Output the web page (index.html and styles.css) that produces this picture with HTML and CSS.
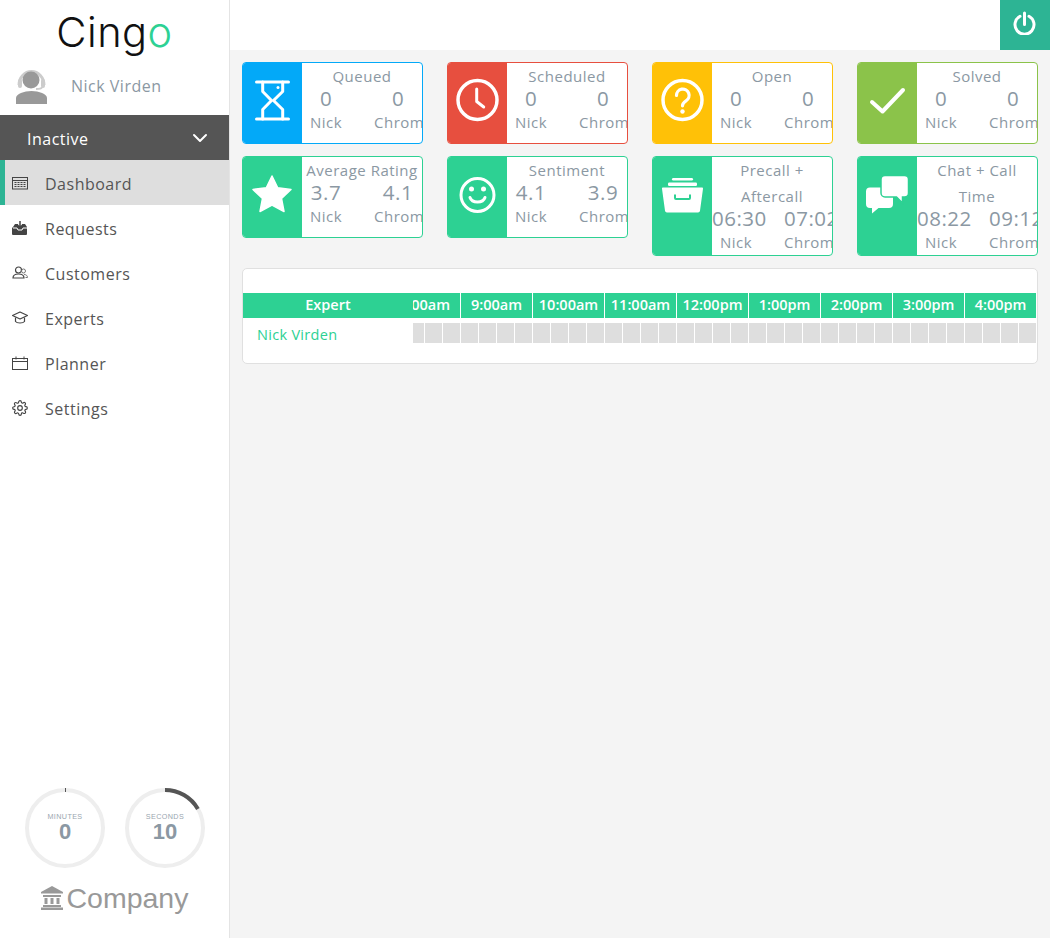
FILE: index.html
```html
<!DOCTYPE html>
<html>
  <head>
    <meta name="viewport" content="width=device-width, initial-scale=1.0" />
    <title>Cingo Dashboard</title>
    <link rel="stylesheet" href="styles.css">
  </head>
  <body>
    <aside class="sidebar">
      <div class="logo">Cing<span class="logo-o">o</span></div>
      <div class="user">
        <svg class="avatar" viewBox="0 0 36 36">
          <path d="M4 17a12 13 0 0 1 25 0" fill="none" stroke="#ccc" stroke-width="3" />
          <circle cx="16" cy="12" r="8.5" fill="#999" />
          <rect x="3" y="11" width="4" height="9" rx="2" fill="#ccc" />
          <rect x="26" y="11" width="4" height="9" rx="2" fill="#ccc" />
          <path d="M27 19q0 2-6 2" fill="none" stroke="#ccc" stroke-width="2" />
          <path d="M1 36v-6c0-4 8-7 15.500-7s15.500 3 15.500 7v6z" fill="#999" />
        </svg>
        <span class="user-name">Nick Virden</span>
      </div>
      <div class="status">
        <span>Inactive</span>
        <svg class="chevron" viewBox="0 0 16 10">
          <path d="M2 2l6 6 6-6" fill="none" stroke="#fff" stroke-width="2" stroke-linecap="round" stroke-linejoin="round" />
        </svg>
      </div>
      <nav class="nav">
        <a class="nav-item active">
          <svg class="nav-icon" viewBox="0 0 16 14">
            <rect x="0.500" y="1.500" width="15" height="11.500" fill="none" stroke="#444" />
            <path d="M1 4.500h14" stroke="#444" />
            <path d="M2.500 6.500h11M2.500 8.500h11M2.500 10.500h11" stroke="#444" stroke-dasharray="2 1" stroke-width="1.200" />
          </svg>
          Dashboard
        </a>
        <a class="nav-item">
          <svg class="nav-icon" viewBox="0 0 16 14">
            <path d="M1 6l2-3h3v2h4V3h3l2 3v7a1 1 0 0 1-1 1H1a1 1 0 0 1-1-1V7z" fill="#444" />
            <path d="M8 0v6M5.500 4L8 6.800 10.500 4" fill="none" stroke="#444" stroke-width="1.500" />
            <path d="M1 7h4l1 2h4l1-2h4" fill="none" stroke="#fff" />
          </svg>
          Requests
        </a>
        <a class="nav-item">
          <svg class="nav-icon" viewBox="0 0 16 14">
            <circle cx="6.500" cy="4" r="3" fill="none" stroke="#444" stroke-width="1.200" />
            <path d="M1 12c0-3 2-4 5.500-4s5.500 1 5.500 4z" fill="none" stroke="#444" stroke-width="1.200" />
            <circle cx="11.500" cy="5" r="2" fill="none" stroke="#777" />
            <path d="M12 8.500c2 0 3.500 1 3.500 3h-2" fill="none" stroke="#777" />
          </svg>
          Customers
        </a>
        <a class="nav-item">
          <svg class="nav-icon" viewBox="0 0 16 14">
            <path d="M8 1l7.500 3.500L8 8 .5 4.500z" fill="none" stroke="#444" stroke-width="1.200" stroke-linejoin="round" />
            <path d="M3.500 6.500v4C5 12.500 11 12.500 12.500 10.500v-4" fill="none" stroke="#444" stroke-width="1.200" />
          </svg>
          Experts
        </a>
        <a class="nav-item">
          <svg class="nav-icon" viewBox="0 0 16 14">
            <rect x="0.500" y="2.500" width="15" height="11" fill="none" stroke="#444" />
            <path d="M1 5.500h14M4 0.500v3M12 0.500v3M7 2.500h2" stroke="#444" />
          </svg>
          Planner
        </a>
        <a class="nav-item">
          <svg class="nav-icon" viewBox="0 0 24 24" fill="none" stroke="#444" stroke-width="1.700">
            <circle cx="12" cy="12" r="3.500" />
            <path d="M19.400 15a1.650 1.650 0 0 0 .33 1.820l.06.06a2 2 0 0 1 0 2.830 2 2 0 0 1-2.830 0l-.06-.06a1.650 1.650 0 0 0-1.820-.33 1.650 1.650 0 0 0-1 1.510V21a2 2 0 0 1-2 2 2 2 0 0 1-2-2v-.09A1.650 1.650 0 0 0 9 19.400a1.650 1.650 0 0 0-1.820.33l-.06.06a2 2 0 0 1-2.830 0 2 2 0 0 1 0-2.830l.06-.06a1.650 1.650 0 0 0 .33-1.820 1.650 1.650 0 0 0-1.510-1H3a2 2 0 0 1-2-2 2 2 0 0 1 2-2h.09A1.650 1.650 0 0 0 4.600 9a1.650 1.650 0 0 0-.33-1.820l-.06-.06a2 2 0 0 1 0-2.830 2 2 0 0 1 2.830 0l.06.06a1.650 1.650 0 0 0 1.820.33H9a1.650 1.650 0 0 0 1-1.510V3a2 2 0 0 1 2-2 2 2 0 0 1 2 2v.09a1.650 1.650 0 0 0 1 1.510 1.650 1.650 0 0 0 1.820-.33l.06-.06a2 2 0 0 1 2.830 0 2 2 0 0 1 0 2.830l-.06.06a1.650 1.650 0 0 0-.33 1.820V9a1.650 1.650 0 0 0 1.510 1H21a2 2 0 0 1 2 2 2 2 0 0 1-2 2h-.09a1.650 1.650 0 0 0-1.510 1z" />
          </svg>
          Settings
        </a>
      </nav>
      <div class="sidebar-foot">
        <div class="timers">
          <svg class="timer" viewBox="0 0 80 80">
            <circle class="timer-track" cx="40" cy="40" r="38" />
            <path d="M40.500 0v4" stroke="#555" />
            <text class="timer-label" x="40" y="31">MINUTES</text>
            <text class="timer-value" x="40" y="51">0</text>
          </svg>
          <svg class="timer" viewBox="0 0 80 80">
            <circle class="timer-track" cx="40" cy="40" r="38" />
            <path class="timer-arc" d="M40 2A38 38 0 0 1 72.900 21" />
            <text class="timer-label" x="40" y="31">SECONDS</text>
            <text class="timer-value" x="40" y="51">10</text>
          </svg>
        </div>
        <div class="company">
          <svg class="company-icon" viewBox="0 0 22 24">
            <path d="M11 0l11 6v1.500H0V6z" fill="#999" />
            <path d="M2 9h18v2H2zM3.500 12h3v6h-3zM9.500 12h3v6h-3zM15.500 12h3v6h-3zM2 19h18v2H2zM0 21.500h22V24H0z" fill="#999" />
          </svg>
          <span>Company</span>
        </div>
      </div>
    </aside>

    <main class="main">
      <header class="topbar">
        <button class="power">
          <svg viewBox="0 0 24 24" width="24" height="24">
            <path d="M7 5.300A9.500 9.500 0 1 0 16 5.300M11.500 2v11.500" fill="none" stroke="#fff" stroke-width="3" stroke-linecap="round" />
          </svg>
        </button>
      </header>

      <section class="cards">
        <div class="card card-blue">
          <div class="card-icon">
            <svg viewBox="0 0 44 44" fill="none" stroke="#fff" stroke-width="3" stroke-linecap="round" stroke-linejoin="round">
              <path d="M6.500 4h32M6.500 41h32" />
              <path d="M12.700 4v9.500L21.500 22.500 12.700 31.500V41M32.700 4v9.500L23.500 22.500 32.700 31.500V41" />
              <circle cx="28" cy="9.500" r="1.500" fill="#fff" stroke="none" />
            </svg>
          </div>
          <div class="card-body">
            <div class="card-title">Queued</div>
            <div class="card-stats">
              <div class="stat"><div class="stat-value">0</div><div class="stat-name">Nick</div></div>
              <div class="stat"><div class="stat-value">0</div><div class="stat-name">Chrome</div></div>
            </div>
          </div>
        </div>

        <div class="card card-red">
          <div class="card-icon">
            <svg viewBox="0 0 44 44" fill="none" stroke="#fff" stroke-width="3.500" stroke-linecap="round" stroke-linejoin="round">
              <circle cx="22.500" cy="22" r="19.500" />
              <path d="M21.700 11v12.500l7 5.500" stroke-width="3" />
            </svg>
          </div>
          <div class="card-body">
            <div class="card-title">Scheduled</div>
            <div class="card-stats">
              <div class="stat"><div class="stat-value">0</div><div class="stat-name">Nick</div></div>
              <div class="stat"><div class="stat-value">0</div><div class="stat-name">Chrome</div></div>
            </div>
          </div>
        </div>

        <div class="card card-yellow">
          <div class="card-icon">
            <svg viewBox="0 0 44 44" fill="none" stroke="#fff" stroke-width="3.500" stroke-linecap="round">
              <circle cx="22.500" cy="22" r="19.500" />
              <path d="M16.500 17.500a6.300 6.300 0 1 1 9.500 5.300c-2.300 1.400-3.500 2.500-3.500 5" stroke-width="3.200" />
              <circle cx="22.500" cy="33.500" r="2.200" fill="#fff" stroke="none" />
            </svg>
          </div>
          <div class="card-body">
            <div class="card-title">Open</div>
            <div class="card-stats">
              <div class="stat"><div class="stat-value">0</div><div class="stat-name">Nick</div></div>
              <div class="stat"><div class="stat-value">0</div><div class="stat-name">Chrome</div></div>
            </div>
          </div>
        </div>

        <div class="card card-lime">
          <div class="card-icon">
            <svg viewBox="0 0 44 44" fill="none" stroke="#fff" stroke-width="4" stroke-linecap="round" stroke-linejoin="round">
              <path d="M7 24l10.500 9.500L38 12" />
            </svg>
          </div>
          <div class="card-body">
            <div class="card-title">Solved</div>
            <div class="card-stats">
              <div class="stat"><div class="stat-value">0</div><div class="stat-name">Nick</div></div>
              <div class="stat"><div class="stat-value">0</div><div class="stat-name">Chrome</div></div>
            </div>
          </div>
        </div>

        <div class="card">
          <div class="card-icon">
            <svg viewBox="0 0 44 44">
              <path d="M22 4l5.700 11.800L41 17.500l-9.500 9 2.500 13-12-6.300-12 6.300 2.500-13-9.500-9 13.300-1.700z" fill="#fff" stroke="#fff" stroke-width="1.500" stroke-linejoin="round" />
            </svg>
          </div>
          <div class="card-body">
            <div class="card-title">Average Rating</div>
            <div class="card-stats">
              <div class="stat"><div class="stat-value">3.7</div><div class="stat-name">Nick</div></div>
              <div class="stat"><div class="stat-value">4.1</div><div class="stat-name">Chrome</div></div>
            </div>
          </div>
        </div>

        <div class="card">
          <div class="card-icon">
            <svg viewBox="0 0 44 44" fill="none" stroke="#fff" stroke-width="3" stroke-linecap="round">
              <circle cx="22.500" cy="23" r="16.500" />
              <circle cx="16.500" cy="17" r="2.500" fill="#fff" stroke="none" />
              <circle cx="28.500" cy="17" r="2.500" fill="#fff" stroke="none" />
              <path d="M15 25.500c2 6 13 6 15 0" />
            </svg>
          </div>
          <div class="card-body">
            <div class="card-title">Sentiment</div>
            <div class="card-stats">
              <div class="stat"><div class="stat-value">4.1</div><div class="stat-name">Nick</div></div>
              <div class="stat"><div class="stat-value">3.9</div><div class="stat-name">Chrome</div></div>
            </div>
          </div>
        </div>

        <div class="card">
          <div class="card-icon">
            <svg viewBox="0 0 44 44">
              <rect x="12" y="6" width="21" height="2.500" rx="1.200" fill="#fff" />
              <rect x="8" y="10.500" width="29" height="3.500" rx="1.200" fill="#fff" />
              <path d="M3 15.500h39a1 1 0 0 1 1 1.200l-3 22a2 2 0 0 1-2 1.800H7a2 2 0 0 1-2-1.800l-3-22a1 1 0 0 1 1-1.200z" fill="#fff" />
              <path d="M15 22.500v3.500a1 1 0 0 0 1 1h13a1 1 0 0 0 1-1v-3.500" fill="none" stroke="#2dd193" stroke-width="2" />
            </svg>
          </div>
          <div class="card-body">
            <div class="card-title">Precall + Aftercall</div>
            <div class="card-stats">
              <div class="stat"><div class="stat-value">06:30</div><div class="stat-name">Nick</div></div>
              <div class="stat"><div class="stat-value">07:02</div><div class="stat-name">Chrome</div></div>
            </div>
          </div>
        </div>

        <div class="card">
          <div class="card-icon">
            <svg viewBox="0 0 44 44">
              <path d="M5 15.500h19a4 4 0 0 1 4 4V32a4 4 0 0 1-4 4H13.500L7 41.500V36H5a4 4 0 0 1-4-4V19.500a4 4 0 0 1 4-4z" fill="#fff" />
              <path d="M20 3.500h19.500a4 4 0 0 1 4 4V21a4 4 0 0 1-4 4H37.500V31l-6-6H20a4 4 0 0 1-4-4V7.500a4 4 0 0 1 4-4z" fill="#fff" stroke="#2dd193" stroke-width="1.500" />
            </svg>
          </div>
          <div class="card-body">
            <div class="card-title">Chat + Call Time</div>
            <div class="card-stats">
              <div class="stat"><div class="stat-value">08:22</div><div class="stat-name">Nick</div></div>
              <div class="stat"><div class="stat-value">09:12</div><div class="stat-name">Chrome</div></div>
            </div>
          </div>
        </div>
      </section>

      <section class="schedule">
        <div class="schedule-head">
          <div class="expert-col">Expert</div>
          <div class="hours">
            <div class="hour">8:00am</div>
            <div class="hour">9:00am</div>
            <div class="hour">10:00am</div>
            <div class="hour">11:00am</div>
            <div class="hour">12:00pm</div>
            <div class="hour">1:00pm</div>
            <div class="hour">2:00pm</div>
            <div class="hour">3:00pm</div>
            <div class="hour">4:00pm</div>
          </div>
        </div>
        <div class="schedule-row">
          <div class="expert-name">Nick Virden</div>
          <div class="slots">
            <span></span><span></span><span></span><span></span><span></span><span></span><span></span>
            <span></span><span></span><span></span><span></span><span></span><span></span><span></span>
            <span></span><span></span><span></span><span></span><span></span><span></span><span></span>
            <span></span><span></span><span></span><span></span><span></span><span></span><span></span>
            <span></span><span></span><span></span><span></span><span></span><span></span><span></span>
          </div>
        </div>
      </section>
    </main>
  </body>
</html>
```

FILE: styles.css
```css
* {
  box-sizing: border-box;
}

body {
  margin: 0;
  height: 938px;
  display: flex;
  overflow: hidden;
  background: #f4f4f4;
  color: #8b98a3;
  font-family: "Open Sans", sans-serif;
}

/* sidebar */
.sidebar {
  width: 230px;
  flex: none;
  display: flex;
  flex-direction: column;
  background: #fff;
  border-right: 1px solid #e4e4e4;
}

.logo {
  height: 65px;
  padding-top: 7px;
  text-align: center;
  font-family: Inter, sans-serif;
  font-weight: 300;
  font-size: 41.5px;
  line-height: 50px;
  letter-spacing: 0.5px;
  color: #111;
}

.logo-o {
  color: #2dd193;
}

.user {
  height: 50px;
  display: flex;
  align-items: center;
  padding: 0 0 8px 15px;
}

.avatar {
  width: 36px;
  height: 36px;
  margin-right: 20px;
}

.user-name {
  font-size: 16px;
  letter-spacing: 0.5px;
}

.status {
  height: 45px;
  display: flex;
  align-items: center;
  justify-content: space-between;
  padding: 2px 21px 0 27px;
  background: #555;
  color: #fff;
  font-size: 16px;
  letter-spacing: 0.5px;
}

.chevron {
  width: 16px;
  height: 10px;
  margin-bottom: 2px;
}

.nav-item {
  height: 45px;
  display: flex;
  align-items: center;
  padding: 2px 0 0 12px;
  color: #555;
  font-size: 16px;
  letter-spacing: 0.5px;
}

.nav-item.active {
  padding-left: 7px;
  border-left: 5px solid #2db494;
  background: #dedede;
}

.nav-icon {
  width: 16px;
  height: 16px;
  margin: 0 17px 2px 0;
  flex: none;
}

.sidebar-foot {
  margin-top: auto;
  padding-bottom: 22px;
}

.timers {
  display: flex;
  gap: 20px;
  padding-left: 25px;
}

.timer {
  width: 80px;
  height: 80px;
}

.timer-track {
  fill: none;
  stroke: #eee;
  stroke-width: 4;
}

.timer-arc {
  fill: none;
  stroke: #555;
  stroke-width: 4;
}

.timer-label {
  font-family: "Liberation Sans", sans-serif;
  font-size: 7.2px;
  letter-spacing: 0.4px;
  fill: #9aa6af;
  text-anchor: middle;
}

.timer-value {
  font-family: "Liberation Sans", sans-serif;
  font-size: 22px;
  font-weight: bold;
  fill: #8b98a3;
  text-anchor: middle;
}

.company {
  display: flex;
  align-items: center;
  justify-content: center;
  margin-top: 12px;
  color: #999;
  font-family: "Liberation Sans", sans-serif;
  font-size: 28.5px;
  line-height: 36px;
}

.company-icon {
  width: 22px;
  height: 24px;
  margin-right: 4px;
}

/* main */
.main {
  flex: 1;
  min-width: 0;
}

.topbar {
  height: 50px;
  display: flex;
  justify-content: flex-end;
  background: #fff;
}

.power {
  width: 50px;
  height: 50px;
  display: flex;
  align-items: center;
  justify-content: center;
  padding: 0 0 4px;
  border: none;
  background: #2db494;
}

.cards {
  display: grid;
  grid-template-columns: repeat(4, 181px);
  column-gap: 24px;
  row-gap: 12px;
  align-items: start;
  padding: 12px 12px 0;
}

.card {
  --tone: #2dd193;
  display: flex;
  align-items: stretch;
  min-height: 82px;
  background: #fff;
  border: 1px solid var(--tone);
  border-radius: 4px;
  overflow: hidden;
}

.card-blue {
  --tone: #03a9f8;
}

.card-red {
  --tone: #e74f3f;
}

.card-yellow {
  --tone: #ffc107;
}

.card-lime {
  --tone: #8bc34a;
}

.card-icon {
  width: 59px;
  flex: none;
  padding: 15px 0 0 7px;
  background: var(--tone);
}

.card-icon svg {
  display: block;
  width: 44px;
  height: 44px;
}

.card-body {
  width: 120px;
  flex: none;
  font-size: 15px;
  letter-spacing: 0.5px;
  text-align: center;
}

.card-title {
  line-height: 26px;
}

.card-stats {
  display: flex;
  gap: 24px;
}

.stat {
  width: 48px;
  flex: none;
  white-space: nowrap;
}

.stat-value {
  height: 20px;
  font-size: 20.5px;
  line-height: 18px;
}

.stat-name {
  line-height: 26px;
}

/* schedule */
.schedule {
  height: 96px;
  margin: 12px 12px 0;
  padding-top: 24px;
  background: #fff;
  border: 1px solid #e0e0e0;
  border-radius: 5px;
}

.schedule-head {
  height: 25px;
  display: flex;
  margin-right: 1px;
  background: #2dd193;
  color: #fff;
  font-size: 14.5px;
  font-weight: 600;
  line-height: 24px;
}

.expert-col {
  width: 170px;
  flex: none;
  text-align: center;
}

.hours {
  flex: 1;
  min-width: 0;
  display: flex;
  justify-content: flex-end;
  overflow: hidden;
}

.hour {
  width: 72px;
  flex: none;
  border-left: 1px solid #fff;
  text-align: center;
}

.schedule-row {
  display: flex;
  margin-right: 1px;
  padding-top: 5px;
}

.expert-name {
  width: 170px;
  flex: none;
  padding-left: 14px;
  color: #2dd193;
  font-size: 14.5px;
  letter-spacing: 0.3px;
  line-height: 24px;
}

.slots {
  flex: 1;
  min-width: 0;
  height: 20px;
  display: flex;
  justify-content: flex-end;
  gap: 1px;
  overflow: hidden;
}

.slots span {
  width: 17px;
  flex: none;
  background: #dedede;
}
```
